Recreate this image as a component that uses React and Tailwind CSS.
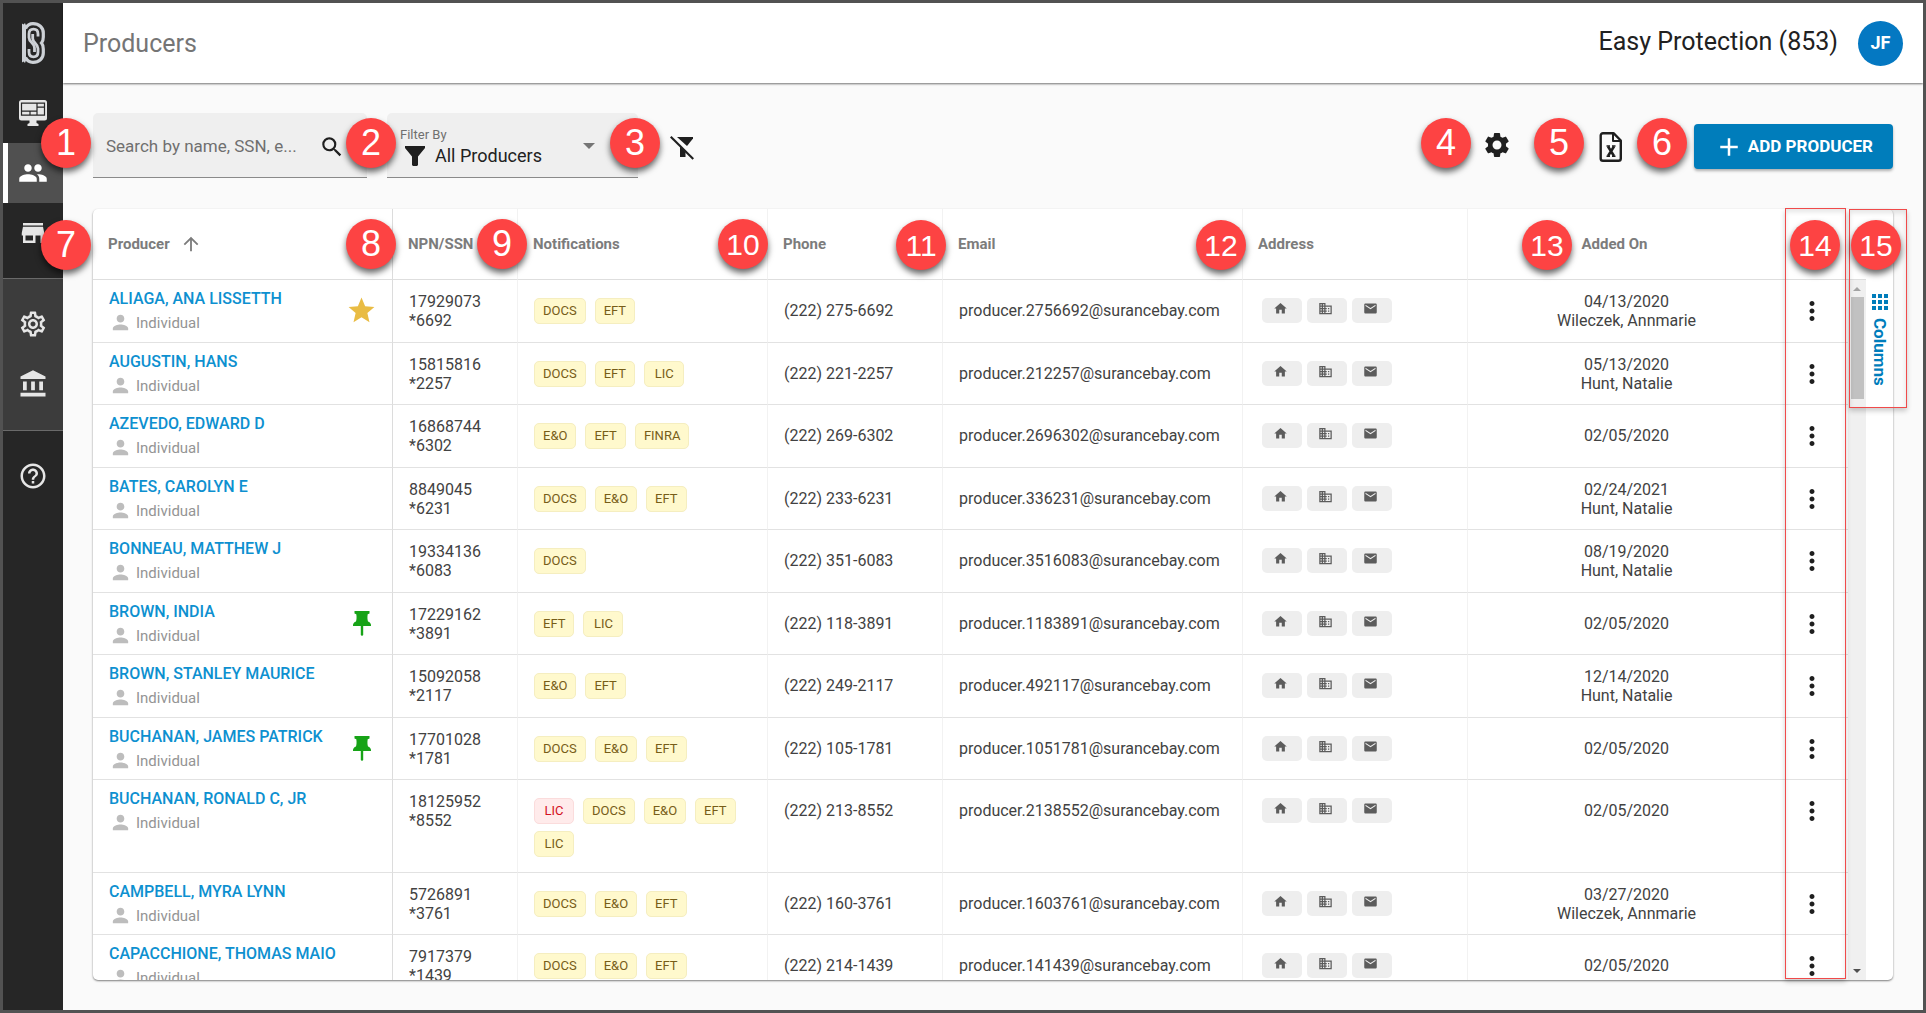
import React from "react";
import {
  MdPeople, MdStore, MdAccountBalance, MdHelpOutline, MdOutlineSettings, MdSettings,
  MdSearch, MdStar, MdPerson, MdHome, MdBusiness, MdEmail, MdMoreVert, MdArrowUpward, MdAdd,
} from "react-icons/md";

const A = "Wileczek, Annmarie";
const H = "Hunt, Natalie";
const rows = [
  { name: "ALIAGA, ANA LISSETTH", mark: "star", npn: "17929073", ssn: "*6692", tags: ["DOCS", "EFT"], phone: "(222) 275-6692", email: "producer.2756692@surancebay.com", date: "04/13/2020", by: A },
  { name: "AUGUSTIN, HANS", npn: "15815816", ssn: "*2257", tags: ["DOCS", "EFT", "LIC"], phone: "(222) 221-2257", email: "producer.212257@surancebay.com", date: "05/13/2020", by: H },
  { name: "AZEVEDO, EDWARD D", npn: "16868744", ssn: "*6302", tags: ["E&O", "EFT", "FINRA"], phone: "(222) 269-6302", email: "producer.2696302@surancebay.com", date: "02/05/2020" },
  { name: "BATES, CAROLYN E", npn: "8849045", ssn: "*6231", tags: ["DOCS", "E&O", "EFT"], phone: "(222) 233-6231", email: "producer.336231@surancebay.com", date: "02/24/2021", by: H },
  { name: "BONNEAU, MATTHEW J", npn: "19334136", ssn: "*6083", tags: ["DOCS"], phone: "(222) 351-6083", email: "producer.3516083@surancebay.com", date: "08/19/2020", by: H },
  { name: "BROWN, INDIA", mark: "pin", npn: "17229162", ssn: "*3891", tags: ["EFT", "LIC"], phone: "(222) 118-3891", email: "producer.1183891@surancebay.com", date: "02/05/2020" },
  { name: "BROWN, STANLEY MAURICE", npn: "15092058", ssn: "*2117", tags: ["E&O", "EFT"], phone: "(222) 249-2117", email: "producer.492117@surancebay.com", date: "12/14/2020", by: H },
  { name: "BUCHANAN, JAMES PATRICK", mark: "pin", npn: "17701028", ssn: "*1781", tags: ["DOCS", "E&O", "EFT"], phone: "(222) 105-1781", email: "producer.1051781@surancebay.com", date: "02/05/2020" },
  { name: "BUCHANAN, RONALD C, JR", npn: "18125952", ssn: "*8552", alert: "LIC", tags: ["DOCS", "E&O", "EFT", "LIC"], phone: "(222) 213-8552", email: "producer.2138552@surancebay.com", date: "02/05/2020", tall: true },
  { name: "CAMPBELL, MYRA LYNN", npn: "5726891", ssn: "*3761", tags: ["DOCS", "E&O", "EFT"], phone: "(222) 160-3761", email: "producer.1603761@surancebay.com", date: "03/27/2020", by: A },
  { name: "CAPACCHIONE, THOMAS MAIO", npn: "7917379", ssn: "*1439", tags: ["DOCS", "E&O", "EFT"], phone: "(222) 214-1439", email: "producer.141439@surancebay.com", date: "02/05/2020" },
];

function Logo() {
  return (
    <svg width="24" height="42" viewBox="0 0 24 42" fill="none" stroke="#cdd1d6" aria-label="Home">
      <path d="M1 1.500L2.500 2.500L4 1L5 3.500V38.500L4 41L2.500 39.500L1 40.500Z" fill="#cdd1d6" stroke="none" />
      <path d="M4.500 6.500C6 3.500 8.500 1.700 12 1.700C18 1.700 22.300 5.500 22.300 11V15C22.300 18 21.800 19.500 20.500 21C21.800 22.500 22.300 24 22.300 27V31C22.300 36.500 18 40.300 12 40.300C8.500 40.300 6 38.500 4.500 35.500" strokeWidth="3.200" />
      <path d="M17 14.500V12C17 8.800 15.200 7.200 12.500 7.200C9.700 7.200 8 8.900 8 12V15.500C8 20.500 13.500 20.500 13.500 26V30" strokeWidth="2.800" />
      <path d="M11.700 12V16.500C11.700 21 17 21.500 17 26.500V30C17 33 15.200 34.800 12.500 34.800C9.700 34.800 8 33.100 8 30V27" strokeWidth="2.800" />
    </svg>
  );
}

function DashboardIcon() {
  return (
    <svg width="28" height="26" viewBox="0 0 28 26" aria-hidden="true">
      <rect width="28" height="20.500" rx="2.500" fill="#e6e6e6" />
      <path d="M10.500 20h7v3l2 1v2h-11v-2l2-1z" fill="#e6e6e6" />
      <path d="M2.500 3.200h23v12h-23zM18 3.200v12M2.500 11.200H18M11 11.200v4M18 7.200h7.500" fill="none" stroke="#262626" strokeWidth="1.200" />
    </svg>
  );
}

function PinIcon() {
  return (
    <svg width="18" height="25" viewBox="0 0 18 25" fill="#17a317" aria-label="Pinned">
      <path d="M1.500 0h15v2.600l-1.800.7c-.5 3-.3 5.200.3 7.200 1.800.7 3 1.900 3 3.500v1H0v-1c0-1.600 1.200-2.800 3-3.500.6-2 .8-4.200.3-7.200l-1.800-.7z" />
      <path d="M7.800 14h2.400v10L9 25l-1.200-1z" />
    </svg>
  );
}

function FileIcon() {
  return (
    <svg width="24" height="32" viewBox="0 0 24 32" fill="none" stroke="#1f1f1f" strokeWidth="2.400" strokeLinejoin="round" aria-hidden="true">
      <path d="M4 2.200h10.500l7.300 7.300v18a2.300 2.300 0 0 1-2.300 2.300H4a2.300 2.300 0 0 1-2.300-2.300V4.500A2.300 2.300 0 0 1 4 2.200z" />
      <path d="M14 2.500v7.500h7.500" strokeWidth="2" />
      <path d="M9 15.500l6 9.500M15 15.500L9 25" strokeWidth="2.600" />
      <path d="M7.500 15h3.500M13 15h3.500M7.500 25.300h3.500M13 25.300h3.500" strokeWidth="1.500" />
    </svg>
  );
}

function NavItem({ label, active, children }) {
  return (
    <button
      type="button"
      aria-label={label}
      className={
        active
          ? "flex h-[60px] w-full items-center justify-center border-l-[5px] border-white bg-[#505050] pr-[5px] text-white"
          : "flex h-[60px] w-full items-center justify-center text-[#e6e6e6]"
      }
    >
      {children}
    </button>
  );
}

function Tag({ children, alert }) {
  return (
    <span
      className={
        alert
          ? "flex h-[26px] min-w-10 items-center justify-center rounded-[5px] border border-[#fbdcdc] bg-[#ffebeb] px-2 text-[13px] text-[#d3121f]"
          : "flex h-[26px] min-w-10 items-center justify-center rounded-[5px] border border-[#f5eec0] bg-[#fff9cd] px-2 text-[13px] text-[#775d18]"
      }
    >
      {children}
    </span>
  );
}

function AddressButton({ label, Icon }) {
  return (
    <button type="button" aria-label={label} className="flex h-[25px] w-10 items-center justify-center rounded-[5px] bg-[#eeeeee] pr-1 pb-1 text-[#5c5c5c]">
      <Icon size={15} />
    </button>
  );
}

const cell = "border-r border-b border-r-[#f2f2f2] border-b-[#e2e2e2] p-0 align-top";
const head = "h-[71px] border-r border-b border-r-[#f2f2f2] border-b-[#dedede] p-0 text-left text-[15px] font-bold text-[#7c7c7c]";

function Row({ row, even }) {
  return (
    <tr className={row.tall ? "h-[93px]" : even ? "h-[62px]" : "h-[63px]"}>
      <td className="border-r border-b border-r-[#dcdcdc] border-b-[#e2e2e2] p-0 align-top">
        <div className="flex h-[61px] items-center justify-between pr-[21px] pl-4">
          <div className="flex flex-col pt-1">
            <a href="#producer" className="text-base leading-5 font-medium text-[#0d90d0]">{row.name}</a>
            <span className="flex items-center gap-1 text-[15px] leading-7 text-[#949494]">
              <MdPerson size={23} className="text-[#bdbdbd]" />
              Individual
            </span>
          </div>
          {row.mark === "star" && <MdStar size={31} className="-mr-1.5 text-[#e9bc44]" aria-label="Favorite" />}
          {row.mark === "pin" && <PinIcon />}
        </div>
      </td>
      <td className={cell}>
        <div className="flex h-[61px] flex-col justify-center pl-4 leading-[19px]">
          <span>{row.npn}</span>
          <span>{row.ssn}</span>
        </div>
      </td>
      <td className={cell}>
        <div className="flex flex-wrap gap-x-[9px] gap-y-[7px] pt-[18px] pr-3 pl-4">
          {row.alert && <Tag alert>{row.alert}</Tag>}
          {row.tags.map((t) => <Tag key={t}>{t}</Tag>)}
        </div>
      </td>
      <td className={cell}><div className="flex h-[61px] items-center pl-4">{row.phone}</div></td>
      <td className={cell}><div className="flex h-[61px] items-center pl-4">{row.email}</div></td>
      <td className={cell}>
        <div className="flex h-[61px] items-center gap-[5px] pl-[19px]">
          <AddressButton label="Home address" Icon={MdHome} />
          <AddressButton label="Business address" Icon={MdBusiness} />
          <AddressButton label="Mailing address" Icon={MdEmail} />
        </div>
      </td>
      <td className={cell}>
        <div className="flex h-[61px] flex-col items-center justify-center leading-[19px]">
          <span>{row.date}</span>
          {row.by && <span>{row.by}</span>}
        </div>
      </td>
      <td className="border-b border-b-[#e2e2e2] p-0 align-top">
        <div className="flex h-[61px] items-center pl-[11px]">
          <button type="button" aria-label="More actions" className="text-[#1f1f1f]"><MdMoreVert size={30} /></button>
        </div>
      </td>
    </tr>
  );
}

const callouts = [
  ["1", "top-[118px] left-[41px]"],
  ["2", "top-[118px] left-[346px]"],
  ["3", "top-[118px] left-[610px]"],
  ["4", "top-[118px] right-[455px]"],
  ["5", "top-[118px] right-[342px]"],
  ["6", "top-[118px] right-[239px]"],
  ["7", "top-[220px] left-[41px]"],
  ["8", "top-[219px] left-[346px]"],
  ["9", "top-[219px] left-[477px]"],
  ["10", "top-[219px] left-[718px]"],
  ["11", "top-[220px] left-[896px]"],
  ["12", "top-[220px] left-[1196px]"],
  ["13", "top-[220px] right-[354px]"],
  ["14", "top-[220px] right-[86px]"],
  ["15", "top-[220px] right-[25px]"],
];

export default function App() {
  return (
    <div className="relative flex h-screen overflow-hidden border-3 border-[#525252] bg-[#fafafa] font-[Roboto,sans-serif] text-base text-[#424242]">
      <nav aria-label="Main" className="flex w-[60px] shrink-0 flex-col bg-[#262626]">
        <a href="#home" className="flex h-20 items-center justify-center"><Logo /></a>
        <div className="pb-[15px]">
          <NavItem label="Dashboard"><DashboardIcon /></NavItem>
          <NavItem label="Producers" active><MdPeople size={30} /></NavItem>
          <NavItem label="Store"><MdStore size={30} /></NavItem>
        </div>
        <div className="border-y border-[#6a6a6a] bg-[#3c3c3c] pt-[15px] pb-4">
          <NavItem label="Settings"><MdOutlineSettings size={30} /></NavItem>
          <NavItem label="Agencies"><MdAccountBalance size={30} /></NavItem>
        </div>
        <div className="pt-[15px]">
          <NavItem label="Help"><MdHelpOutline size={30} /></NavItem>
        </div>
      </nav>

      <div className="flex min-w-0 flex-1 flex-col">
        <header className="flex h-20 shrink-0 items-center justify-between bg-white pr-5 pl-5 shadow-[0_1px_2px_rgba(0,0,0,0.55)]">
          <h1 className="pt-0.5 text-[25px] text-[#757575]">Producers</h1>
          <div className="flex items-center gap-5">
            <span className="pb-0.5 text-[25px] text-[#212121]">Easy Protection (853)</span>
            <button type="button" aria-label="Account" className="flex size-[45px] items-center justify-center rounded-full bg-[#0478c2] text-lg font-bold text-white">JF</button>
          </div>
        </header>

        <main className="flex min-h-0 flex-1 flex-col px-[30px] pt-[30px] pb-[30px]">
          <div className="mb-[31px] flex shrink-0 items-center">
            <div className="flex h-[65px] w-[274px] items-center rounded-t-[5px] border-b border-[#8a8a8a] bg-[#efefef] pt-1 pr-[22px] pl-[13px]">
              <input type="text" aria-label="Search" placeholder="Search by name, SSN, e..." className="min-w-0 flex-1 bg-transparent text-[17px] text-[#333333] outline-none placeholder:text-[#6f6f6f]" />
              <button type="button" aria-label="Search" className="text-[#1f1f1f]"><MdSearch size={26} /></button>
            </div>
            <div className="ml-5 flex h-[65px] w-[251px] flex-col rounded-t-[5px] border-b border-[#8a8a8a] bg-[#efefef] pt-[14px] pr-[43px] pl-[13px]">
              <label htmlFor="filter" className="text-[13px] leading-4 text-[#6f6f6f]">Filter By</label>
              <div className="flex items-center pl-[5px]">
                <svg width="20" height="20" viewBox="0 0 20 20" fill="#1f1f1f" aria-hidden="true"><path d="M0 0h20v2l-7 8.500V19l-1 1H8l-1-1v-8.500L0 2z" /></svg>
                <select id="filter" className="ml-[10px] flex-1 appearance-none bg-transparent text-lg leading-6 text-[#212121] outline-none">
                  <option>All Producers</option>
                </select>
                <svg width="12" height="6" viewBox="0 0 12 6" fill="#757575" aria-hidden="true" className="mb-5"><path d="M0 0h12L6 6z" /></svg>
              </div>
            </div>
            <button type="button" aria-label="Clear filter" className="ml-8 pt-1">
              <svg width="24" height="24" viewBox="0 0 24 24" fill="#1f1f1f" aria-hidden="true">
                <path d="M7 1h16v1.500L17 10z" />
                <path d="M10 10.500l5.500 5.600V21H10z" />
                <path d="M0 1.500L1.500 0 24 22.200l-1.500 1.500z" />
              </svg>
            </button>
            <div className="ml-auto flex items-center pt-0.5">
              <button type="button" aria-label="Settings" className="pb-1 text-[#1f1f1f]"><MdSettings size={30} /></button>
              <button type="button" aria-label="Export to Excel" className="ml-[87px]"><FileIcon /></button>
              <button type="button" className="ml-[71px] flex h-[45px] items-center gap-1 rounded-[4px] bg-[#007dbb] pr-5 pl-5 text-[17px] font-bold text-white shadow-[0_2px_3px_rgba(0,0,0,0.3)]">
                <MdAdd size={30} />
                ADD PRODUCER
              </button>
            </div>
          </div>

          <section aria-label="Producer list" className="flex min-h-0 flex-1 overflow-hidden rounded-[5px] bg-white shadow-[0_1px_2px_rgba(0,0,0,0.5)]">
            <div className="min-w-0 flex-1 overflow-hidden">
              <table className="w-full table-fixed border-separate border-spacing-0">
                <colgroup>
                  <col className="w-[300px]" />
                  <col className="w-[125px]" />
                  <col className="w-[250px]" />
                  <col className="w-[175px]" />
                  <col className="w-[300px]" />
                  <col className="w-[225px]" />
                  <col />
                  <col className="w-[62px]" />
                </colgroup>
                <thead>
                  <tr>
                    <th scope="col" className="h-[71px] border-r border-b border-r-[#dcdcdc] border-b-[#dedede] p-0 pl-[15px] text-left text-[15px] font-bold text-[#7c7c7c]">
                      <span className="flex items-center gap-[10px]">Producer <MdArrowUpward size={22} /></span>
                    </th>
                    <th scope="col" className={head}><span className="pl-[15px]">NPN/SSN</span></th>
                    <th scope="col" className={head}><span className="pl-[15px]">Notifications</span></th>
                    <th scope="col" className={head}><span className="pl-[15px]">Phone</span></th>
                    <th scope="col" className={head}><span className="pl-[15px]">Email</span></th>
                    <th scope="col" className={head}><span className="pl-[15px]">Address</span></th>
                    <th scope="col" className={head}><span className="block pr-6 text-center">Added On</span></th>
                    <th scope="col" aria-label="Actions" className="border-b border-b-[#dedede] p-0" />
                  </tr>
                </thead>
                <tbody>
                  {rows.map((r, i) => <Row key={r.name} row={r} even={i % 2 === 1} />)}
                </tbody>
              </table>
            </div>
            <div aria-hidden="true" className="flex w-[18px] shrink-0 flex-col pt-[70px]">
              <div className="flex flex-1 flex-col items-center border-t border-[#dedede] bg-[#f0f0f0] pt-[7px] pb-[7px]">
                <svg width="8" height="4" viewBox="0 0 8 4" fill="#a3a3a3"><path d="M0 4h8L4 0z" /></svg>
                <div className="mt-[6px] h-[102px] w-[13px] bg-[#c1c1c1]" />
                <svg width="8" height="4" viewBox="0 0 8 4" fill="#505050" className="mt-auto"><path d="M0 0h8L4 4z" /></svg>
              </div>
            </div>
            <div className="flex w-[27px] shrink-0 flex-col items-center pt-[85px]">
              <button type="button" className="flex flex-col items-center gap-2 text-[#007dbb]">
                <svg width="16" height="16" viewBox="0 0 16 16" fill="currentColor" aria-hidden="true">
                  <path d="M0 0h4v4H0zM6 0h4v4H6zM12 0h4v4h-4zM0 6h4v4H0zM6 6h4v4H6zM12 6h4v4h-4zM0 12h4v4H0zM6 12h4v4H6zM12 12h4v4h-4z" />
                </svg>
                <span className="text-[17px] leading-5 font-bold [writing-mode:vertical-rl]">Columns</span>
              </button>
            </div>
          </section>
        </main>
      </div>

      <div aria-hidden="true" className="pointer-events-none absolute top-[205px] right-[77px] bottom-[31px] w-[61px] border border-[#f04a4a] shadow-[0_3px_5px_rgba(0,0,0,0.2),inset_0_3px_5px_rgba(0,0,0,0.1)]" />
      <div aria-hidden="true" className="pointer-events-none absolute top-[206px] right-[16px] h-[199px] w-[58px] border border-[#f04a4a] shadow-[0_3px_5px_rgba(0,0,0,0.2),inset_0_3px_5px_rgba(0,0,0,0.1)]" />
      <div className="pointer-events-none absolute -top-[3px] -right-[3px] -bottom-[3px] -left-[3px]">
        {callouts.map(([n, pos]) => (
          <span key={n} className={`absolute flex size-[50px] items-center justify-center rounded-full bg-[#fd4343] font-['Liberation_Sans',Arial,sans-serif] text-white shadow-[0_4px_6px_rgba(0,0,0,0.6)] ${n.length > 1 ? "text-[30px]" : "text-[36px]"} ${pos}`}>
            {n}
          </span>
        ))}
      </div>
    </div>
  );
}
